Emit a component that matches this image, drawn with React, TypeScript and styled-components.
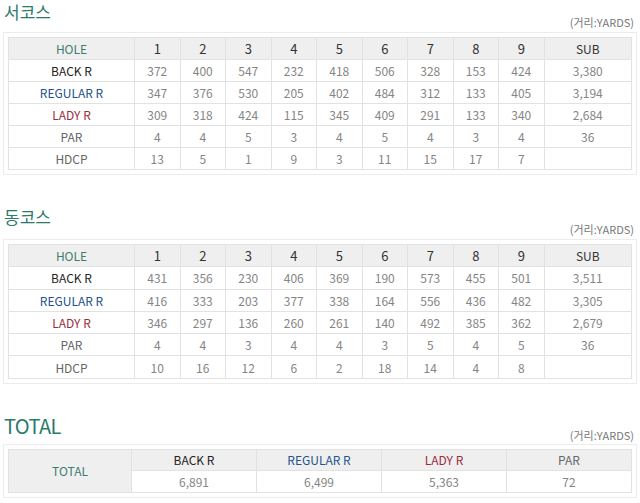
import React from "react";
import styled, { createGlobalStyle } from "styled-components";

const Global = createGlobalStyle`
  html, body { margin: 0; padding: 0; background: #fff; }
  body { font-family: "Noto Sans CJK KR", "Noto Sans", sans-serif; }
`;

const Page = styled.div`
  width: 640px;
  box-sizing: border-box;
  padding: 1px 3px 0;
`;

const Section = styled.section<{ $gap?: number }>`
  margin-top: ${(p) => p.$gap ?? 0}px;
`;

const Head = styled.div<{ $h?: number }>`
  display: flex;
  justify-content: space-between;
  align-items: flex-start;
  height: ${(p) => p.$h ?? 31}px;
  padding-left: 1px;
`;

const Title = styled.h2<{ $latin?: boolean }>`
  margin: 0;
  font-weight: 400;
  color: #2c7a6b;
  font-size: ${(p) => (p.$latin ? "20px" : "17px")};
  line-height: ${(p) => (p.$latin ? "26px" : "22px")};
  letter-spacing: ${(p) => (p.$latin ? "-0.6px" : "0")};
`;

const Unit = styled.span<{ $top: number }>`
  font-size: 11px;
  color: #777;
  padding-top: ${(p) => p.$top}px;
  padding-right: 3px;
  line-height: 14px;
`;

const Frame = styled.div`
  border: 1px solid #ececec;
  padding: 4px;
`;

const Table = styled.table`
  width: 100%;
  border-collapse: collapse;
  table-layout: fixed;
  font-size: 12px;
`;

const Row = styled.tr<{ $h: number }>`
  height: ${(p) => p.$h}px;
`;

type Tone = "hole" | "back" | "regular" | "lady" | "muted" | "num" | "head";
const toneColor: Record<Tone, string> = {
  hole: "#3d7d70",
  back: "#222",
  regular: "#24528c",
  lady: "#9a2d3c",
  muted: "#666",
  num: "#858585",
  head: "#333",
};

const Cell = styled.td<{ $tone: Tone; $gray?: boolean; $size?: number }>`
  border: 1px solid #e2e2e2;
  text-align: center;
  padding: 0;
  font-weight: 400;
  color: ${(p) => toneColor[p.$tone]};
  background: ${(p) => (p.$gray ? "#efefef" : "#fff")};
  font-size: ${(p) => p.$size ?? 12}px;
  white-space: nowrap;
`;

type ScoreRow = { label: string; tone: Tone; values: string[] };

const west: ScoreRow[] = [
  { label: "BACK R", tone: "back", values: ["372", "400", "547", "232", "418", "506", "328", "153", "424", "3,380"] },
  { label: "REGULAR R", tone: "regular", values: ["347", "376", "530", "205", "402", "484", "312", "133", "405", "3,194"] },
  { label: "LADY R", tone: "lady", values: ["309", "318", "424", "115", "345", "409", "291", "133", "340", "2,684"] },
  { label: "PAR", tone: "muted", values: ["4", "4", "5", "3", "4", "5", "4", "3", "4", "36"] },
  { label: "HDCP", tone: "muted", values: ["13", "5", "1", "9", "3", "11", "15", "17", "7", ""] },
];

const east: ScoreRow[] = [
  { label: "BACK R", tone: "back", values: ["431", "356", "230", "406", "369", "190", "573", "455", "501", "3,511"] },
  { label: "REGULAR R", tone: "regular", values: ["416", "333", "203", "377", "338", "164", "556", "436", "482", "3,305"] },
  { label: "LADY R", tone: "lady", values: ["346", "297", "136", "260", "261", "140", "492", "385", "362", "2,679"] },
  { label: "PAR", tone: "muted", values: ["4", "4", "3", "4", "4", "3", "5", "4", "5", "36"] },
  { label: "HDCP", tone: "muted", values: ["10", "16", "12", "6", "2", "18", "14", "4", "8", ""] },
];

const holes = ["1", "2", "3", "4", "5", "6", "7", "8", "9"];

function CourseTable({ rows, h }: { rows: ScoreRow[]; h: number }) {
  return (
    <Frame>
      <Table>
        <colgroup>
          <col style={{ width: 126 }} />
          {holes.map((n) => (
            <col key={n} style={{ width: 45.5 }} />
          ))}
          <col />
        </colgroup>
        <tbody>
          <Row $h={h}>
            <Cell as="th" $tone="hole" $gray>HOLE</Cell>
            {holes.map((n) => (
              <Cell as="th" key={n} $tone="head" $gray $size={13}>
                {n}
              </Cell>
            ))}
            <Cell as="th" $tone="head" $gray>SUB</Cell>
          </Row>
          {rows.map((r) => (
            <Row $h={h} key={r.label}>
              <Cell $tone={r.tone}>{r.label}</Cell>
              {r.values.map((v, i) => (
                <Cell key={i} $tone="num">
                  {v}
                </Cell>
              ))}
            </Row>
          ))}
        </tbody>
      </Table>
    </Frame>
  );
}

function TotalTable() {
  return (
    <Frame>
      <Table>
        <colgroup>
          <col style={{ width: 123 }} />
          <col />
          <col />
          <col />
          <col />
        </colgroup>
        <tbody>
          <Row $h={21}>
            <Cell as="th" rowSpan={2} $tone="hole" $gray>
              TOTAL
            </Cell>
            <Cell as="th" $tone="back" $gray>BACK R</Cell>
            <Cell as="th" $tone="regular" $gray>REGULAR R</Cell>
            <Cell as="th" $tone="lady" $gray>LADY R</Cell>
            <Cell as="th" $tone="muted" $gray>PAR</Cell>
          </Row>
          <Row $h={22}>
            <Cell $tone="num">6,891</Cell>
            <Cell $tone="num">6,499</Cell>
            <Cell $tone="num">5,363</Cell>
            <Cell $tone="num">72</Cell>
          </Row>
        </tbody>
      </Table>
    </Frame>
  );
}

export default function App() {
  return (
    <Page>
      <Global />
      <Section>
        <Head>
          <Title>서코스</Title>
          <Unit $top={14}>(거리:YARDS)</Unit>
        </Head>
        <CourseTable rows={west} h={22} />
      </Section>
      <Section $gap={31}>
        <Head $h={33}>
          <Title>동코스</Title>
          <Unit $top={16}>(거리:YARDS)</Unit>
        </Head>
        <CourseTable rows={east} h={22.3} />
      </Section>
      <Section $gap={29}>
        <Head $h={31}>
          <Title $latin>TOTAL</Title>
          <Unit $top={15}>(거리:YARDS)</Unit>
        </Head>
        <TotalTable />
      </Section>
    </Page>
  );
}
